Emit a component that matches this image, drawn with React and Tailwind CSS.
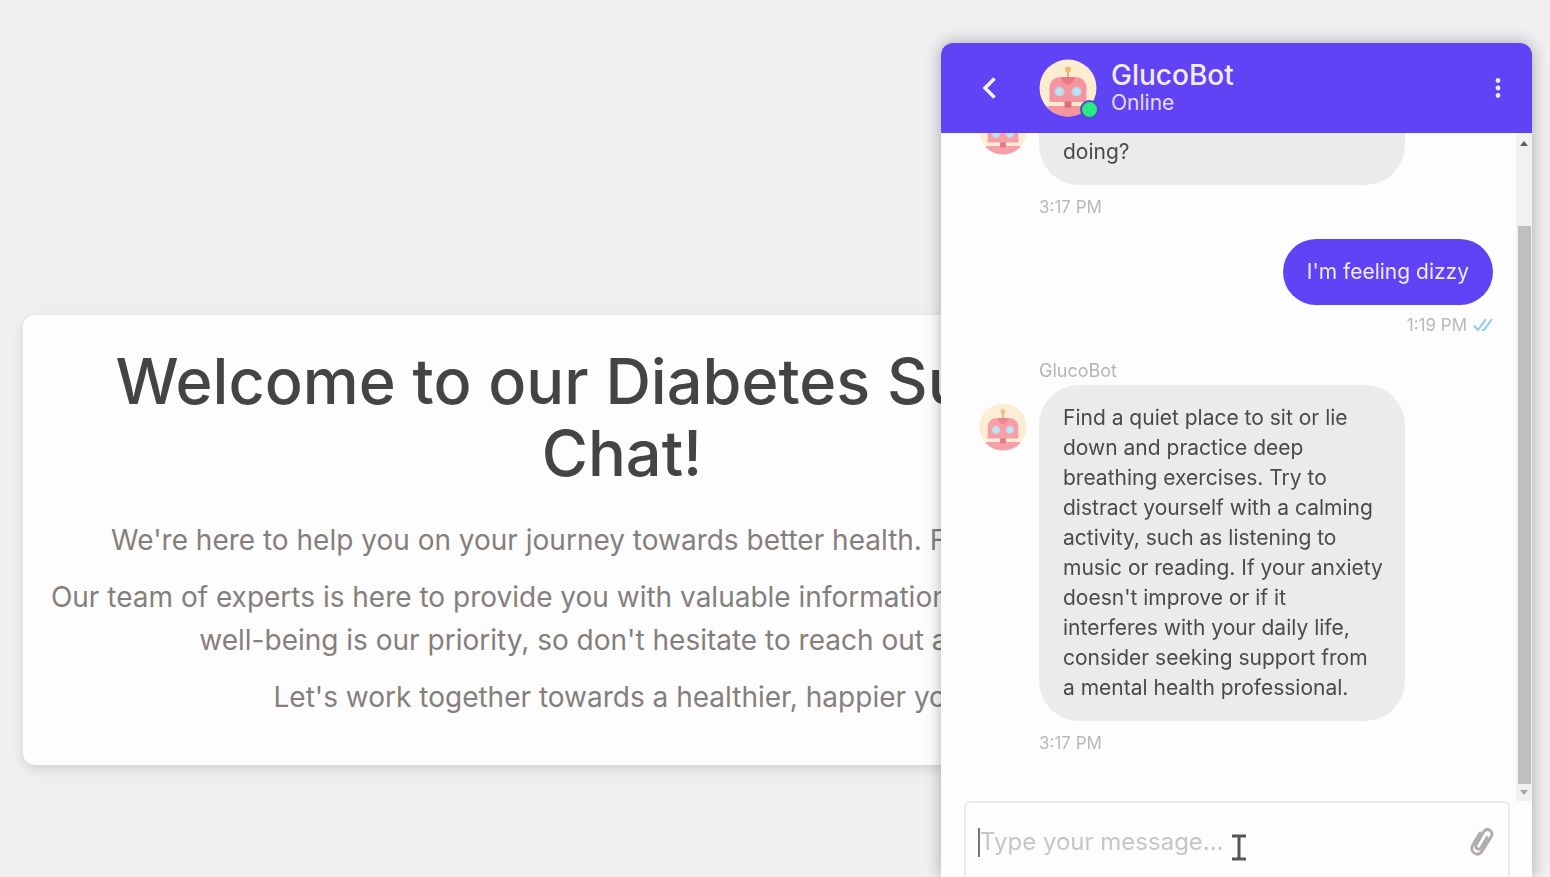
import React from "react";

function RobotAvatar({ className }) {
  return (
    <svg viewBox="0 0 58 58" className={className} aria-hidden="true">
      <defs>
        <clipPath id="face">
          <circle cx="29" cy="29" r="28.5" />
        </clipPath>
      </defs>
      <circle cx="29" cy="29" r="28.5" fill="#fcecd0" />
      <g clipPath="url(#face)">
        <rect x="28" y="10" width="2" height="9" fill="#e3a984" />
        <circle cx="29" cy="10.500" r="3" fill="#eeb968" />
        <path d="M10.500 43V29c0-7 5-11 12-11h13c7 0 12 4 12 11v14z" fill="#f5959f" />
        <path d="M22 18h14l-2 5-5 3-5-3z" fill="#ec7885" />
        <path d="M10 47h38l6 2v9H4v-9z" fill="#f5959f" />
        <rect x="25.500" y="42.500" width="7" height="6" rx="1" fill="#df6a78" />
        <circle cx="20.500" cy="32.500" r="5" fill="#c3d3e6" />
        <circle cx="37.500" cy="32.500" r="5" fill="#c3d3e6" />
        <circle cx="20.500" cy="32.500" r="3" fill="#b8e6f6" />
        <circle cx="37.500" cy="32.500" r="3" fill="#b8e6f6" />
      </g>
    </svg>
  );
}

function BotMessage({ children, time }) {
  return (
    <article className="flex gap-3">
      <RobotAvatar className="mt-[46px] size-12 shrink-0 opacity-90" />
      <div className="w-[366px]">
        <div className="h-7 text-[18px] leading-7 text-[#b4b4b4]">GlucoBot</div>
        <p className="rounded-[40px] bg-[#ebebeb] py-[18px] pr-5 pl-6 text-[21px] leading-[30px] text-[#4a4a4a]">
          {children}
        </p>
        <time className="mt-2.5 block text-[17px] leading-6 text-[#b9b9b9]">{time}</time>
      </div>
    </article>
  );
}

function UserMessage({ children, time }) {
  return (
    <article className="flex flex-col items-end">
      <p className="rounded-full bg-[#5f43f5] px-6 py-[18px] text-[21px] leading-[30px] text-[#efeaff]">
        {children}
      </p>
      <div className="mt-2 flex items-center gap-1.5 text-[17px] leading-6 text-[#b9b9b9]">
        <time>{time}</time>
        <svg width="20" height="14" viewBox="0 0 20 14" fill="none" stroke="#8ccde8" strokeWidth="2" aria-label="Read">
          <path d="M1 7.500l4 4.500L13 1M9 12l2 0L19 1" />
        </svg>
      </div>
    </article>
  );
}

function Scrollbar() {
  return (
    <div className="flex w-4 shrink-0 flex-col items-center bg-[#f1f1f1]" aria-hidden="true">
      <svg className="mt-2 shrink-0" width="8" height="5" viewBox="0 0 8 5">
        <path d="M4 0l4 5H0z" fill="#5c5c5c" />
      </svg>
      <div className="mt-20 w-[13px] flex-1 bg-[#bfbfbf]" />
      <svg className="my-1.5 shrink-0" width="8" height="5" viewBox="0 0 8 5">
        <path d="M0 0h8L4 5z" fill="#a3a3a3" />
      </svg>
    </div>
  );
}

function ChatWidget() {
  return (
    <section
      aria-label="GlucoBot chat"
      className="fixed top-[43px] right-[18px] bottom-0 flex w-[591px] flex-col rounded-t-xl bg-[#fdfdfd] font-['Inter',sans-serif] shadow-[0_0_16px_rgba(0,0,0,0.3)]"
    >
      <header className="flex h-[90px] shrink-0 items-center rounded-t-xl bg-[#5f43f5] pr-[26px] pl-9 text-[#f1ecff]">
        <button type="button" aria-label="Back" className="flex size-6 items-center justify-center">
          <svg width="16" height="24" viewBox="0 0 16 24" fill="none" stroke="#f6f2ff" strokeWidth="3.500">
            <path d="M13.500 2.500L4 12l9.500 9.500" />
          </svg>
        </button>
        <div className="relative ml-[38px]">
          <RobotAvatar className="size-[58px]" />
          <span className="absolute -right-0.5 -bottom-0.5 size-[19px] rounded-full border-2 border-[#4a4ec4] bg-[#2be882]" />
        </div>
        <div className="ml-3.5 flex-1">
          <h2 className="text-[28px] leading-[30px] font-medium">GlucoBot</h2>
          <p className="text-[21px] leading-[26px] text-[#e2dcff]">Online</p>
        </div>
        <button type="button" aria-label="Menu" className="flex w-4 justify-center">
          <svg width="6" height="22" viewBox="0 0 6 22" fill="#efeaff">
            <circle cx="3" cy="3.500" r="2.400" />
            <circle cx="3" cy="11" r="2.400" />
            <circle cx="3" cy="18.500" r="2.400" />
          </svg>
        </button>
      </header>

      <div className="flex min-h-0 flex-1">
        <div className="flex min-w-0 flex-1 flex-col justify-end gap-5 overflow-hidden pr-[23px] pb-[46px] pl-[38px]">
          <BotMessage time="3:17 PM">
            Hi there! How are we
            <br />
            doing?
          </BotMessage>
          <UserMessage time="1:19 PM">I'm feeling dizzy</UserMessage>
          <BotMessage time="3:17 PM">
            Find a quiet place to sit or lie down and practice deep breathing exercises. Try to distract
            yourself with a calming activity, such as listening to music or reading. If your anxiety
            doesn't improve or if it interferes with your daily life, consider seeking support from a
            mental health professional.
          </BotMessage>
        </div>
        <Scrollbar />
      </div>

      <form className="mr-[22px] ml-[23px] flex h-[76px] shrink-0 items-center rounded-t-md border-2 border-b-0 border-[#ececec] px-3 pt-1">
        <span className="h-[29px] w-0.5 bg-[#777]" aria-hidden="true" />
        <input
          type="text"
          aria-label="Message"
          placeholder="Type your message..."
          className="min-w-0 flex-1 bg-transparent text-[24px] text-[#4a4a4a] caret-transparent outline-none placeholder:text-[#c6c6c6]"
        />
        <button type="button" aria-label="Attach file" className="flex size-7 items-center justify-center">
          <svg width="24" height="28" viewBox="0 0 24 28" fill="none" stroke="#b0acae" strokeWidth="2.900" strokeLinecap="round">
            <path d="M10 5L3 16.500c-2 3.500-1.500 7 1.500 8.800 3 1.700 6 .5 8-2.800l8.500-13.500c1.500-2.700 1-5.500-1.200-6.800-2.300-1.300-4.800-.6-6.300 1.800L6.500 16c-1 1.800-.8 3.800.7 4.700s3 .3 4-1.200L17 9.500" />
          </svg>
        </button>
      </form>

      <svg
        className="pointer-events-none absolute bottom-4 left-[290px]"
        width="16"
        height="27"
        viewBox="0 0 16 27"
        fill="none"
        stroke="#555"
        strokeWidth="3"
        aria-hidden="true"
      >
        <path d="M1 2h14M1 25h14M8 2v23" />
      </svg>
    </section>
  );
}

export default function App() {
  return (
    <div className="min-h-screen overflow-hidden bg-[#efeff1] pt-[315px] pb-28">
      <main className="mr-[329px] ml-[23px] rounded-xl bg-[#fdfdfd] px-6 pt-[30px] pb-[46px] text-center font-['Inter',sans-serif] shadow-[0_4px_12px_rgba(0,0,30,0.12)]">
        <h1 className="text-[63px] leading-[72px] font-medium text-[#444]">
          Welcome to our Diabetes Support
          <br />
          Chat!
        </h1>
        <div className="mt-[30px] flex flex-col gap-3.5 text-[28px] leading-[43px] text-[#857f7c]">
          <p>We're here to help you on your journey towards better health. Feel free to ask</p>
          <p>
            Our team of experts is here to provide you with valuable information and support. Your
            <br />
            well-being is our priority, so don't hesitate to reach out anytime.
          </p>
          <p>Let's work together towards a healthier, happier you!</p>
        </div>
      </main>
      <ChatWidget />
    </div>
  );
}
